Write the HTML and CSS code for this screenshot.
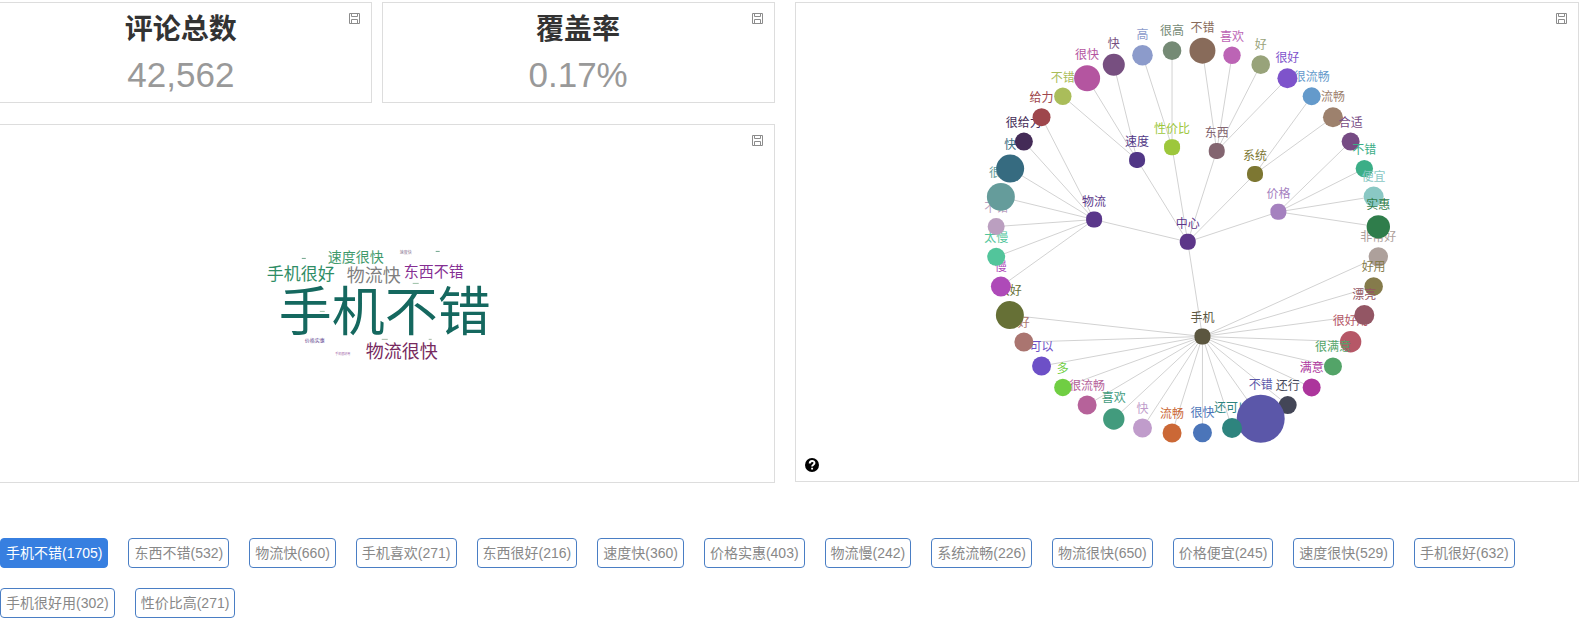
FILE: index.html
```html
<!DOCTYPE html>
<html lang="zh-CN">
<head>
<meta charset="utf-8">
<title>评论分析</title>
<link rel="stylesheet" href="styles.css">
</head>
<body>
<svg class="defs" width="0" height="0" aria-hidden="true">
  <symbol id="save" viewBox="0 0 11 11">
    <path d="M.5 .5h10v10h-10zM2.5 .5v3h6v-3M2.500 10.500v-4h6v4" fill="none" stroke="currentColor"/>
  </symbol>
</svg>
<main class="dashboard">
  <div class="left">
    <div class="stats">
      <section class="card stat">
        <h2 class="stat-title">评论总数</h2>
        <p class="stat-value">42,562</p>
        <button class="save" type="button" aria-label="保存"><svg class="save-icon"><use href="#save"/></svg></button>
      </section>
      <section class="card stat">
        <h2 class="stat-title">覆盖率</h2>
        <p class="stat-value">0.17%</p>
        <button class="save" type="button" aria-label="保存"><svg class="save-icon"><use href="#save"/></svg></button>
      </section>
    </div>
    <section class="card">
      <svg class="chart cloud" viewBox="-9 125 783 357" role="img" aria-label="词云">
        <text x="385" y="331" font-size="53" fill="#15685f">手机不错</text>
        <text x="301" y="280" font-size="17" fill="#2f8d66">手机很好</text>
        <text x="374" y="282" font-size="18" fill="#7f7f7f">物流快</text>
        <text x="356" y="262" font-size="14" fill="#3f9a6c">速度很快</text>
        <text x="434" y="277" font-size="15" fill="#852f93">东西不错</text>
        <text x="402" y="358" font-size="18" fill="#772a60">物流很快</text>
        <text x="406" y="254" font-size="4" fill="#8a7690">速度快</text>
        <text x="315" y="342" font-size="5" fill="#5a3a8a">价格实惠</text>
        <text x="343" y="355" font-size="3" fill="#a066a8">手机很好用</text>
        <g class="specks">
          <path stroke="#6fa58c" d="M302 258.500h4M436 251.500h4"/>
          <path stroke="#9cc0a6" d="M413 283.500h6M320 311.500h5"/>
          <path stroke="#a5b8a5" d="M382 339.500h6M429 339.500h3"/>
        </g>
      </svg>
      <button class="save" type="button" aria-label="保存"><svg class="save-icon"><use href="#save"/></svg></button>
    </section>
  </div>
  <section class="card">
    <svg id="tree" class="chart tree" viewBox="796 3 783 478" role="img" aria-label="关系图"></svg>
    <button class="save" type="button" aria-label="保存"><svg class="save-icon"><use href="#save"/></svg></button>
    <button class="help" type="button" aria-label="帮助">
      <svg class="help-icon" viewBox="0 0 14 14"><circle cx="7" cy="7" r="7"/><path d="M4.700 5.400C4.700 2.300 9.500 2.300 9.500 5.100C9.500 6.700 7.100 6.700 7.100 8.500M7.100 9.700v1.900" fill="none" stroke="#fff" stroke-width="1.900"/></svg>
    </button>
  </section>
</main>
<nav class="tags" aria-label="标签">
  <button type="button" class="tag active">手机不错(1705)</button>
  <button type="button" class="tag">东西不错(532)</button>
  <button type="button" class="tag">物流快(660)</button>
  <button type="button" class="tag">手机喜欢(271)</button>
  <button type="button" class="tag">东西很好(216)</button>
  <button type="button" class="tag">速度快(360)</button>
  <button type="button" class="tag">价格实惠(403)</button>
  <button type="button" class="tag">物流慢(242)</button>
  <button type="button" class="tag">系统流畅(226)</button>
  <button type="button" class="tag">物流很快(650)</button>
  <button type="button" class="tag">价格便宜(245)</button>
  <button type="button" class="tag">速度很快(529)</button>
  <button type="button" class="tag">手机很好(632)</button>
  <button type="button" class="tag">手机很好用(302)</button>
  <button type="button" class="tag">性价比高(271)</button>
</nav>
<script src="tree.js"></script>
</body>
</html>
```
FILE: styles.css
```css
* {
  box-sizing: border-box;
}

body {
  margin: 0;
  padding-top: 2px;
  background: #fff;
  color: #333;
  font-family: "Liberation Sans", "Noto Sans CJK SC", sans-serif;
  font-size: 14px;
  overflow-x: hidden;
}

.defs {
  position: absolute;
}

.dashboard {
  display: grid;
  grid-template-columns: 1fr 1fr;
  gap: 20px;
  align-items: start;
  margin-left: -10px;
  padding-right: 15px;
}

.left {
  display: grid;
  gap: 21px;
}

.stats {
  display: grid;
  grid-template-columns: 382fr 393fr;
  gap: 10px;
}

.card {
  position: relative;
  border: 1px solid #ddd;
}

.stat {
  padding: 7px 0 2px;
  text-align: center;
}

.stat-title {
  margin: 0;
  font-size: 28px;
  font-weight: bold;
  line-height: 40px;
}

.stat-value {
  margin: 0;
  color: #999;
  font-size: 35px;
  line-height: 50px;
}

.save,
.help {
  position: absolute;
  padding: 0;
  border: 0;
  background: none;
}

.save {
  top: 10px;
  right: 11px;
  color: #8c8c8c;
}

.save-icon {
  display: block;
  width: 11px;
  height: 11px;
}

.help {
  left: 9px;
  bottom: 9px;
}

.help-icon {
  display: block;
  width: 14px;
  height: 14px;
}

.chart {
  display: block;
  width: 100%;
  height: auto;
  text-anchor: middle;
  font-family: "Noto Sans CJK SC", sans-serif;
}

.tree {
  font-size: 12px;
}

.links {
  stroke: #d2d2d2;
  stroke-width: 1;
}

.tags {
  display: flex;
  flex-wrap: wrap;
  gap: 20px;
  margin-top: 55px;
  padding-right: 15px;
}

.tag {
  height: 30px;
  padding: 1px 5px 0;
  border: 1px solid #4a7ec4;
  border-radius: 4px;
  background: #fff;
  color: #888;
  font: inherit;
  line-height: 27px;
}

.active {
  border-color: #377fe0;
  background: #377fe0;
  color: #fff;
}
```
FILE: tree.js
```js
const root = { x: 1188, y: 242, color: "#5d3689", name: "中心" };

// Each leaf: name, x, y, radius, colour, and whether its label lies over its neighbours.
const groups = [
  { name: "物流", x: 1094.3, y: 219.7, color: "#5a378a", leaves: [
    ["慢", 1001, 286.7, 10, "#ae4ab8"],
    ["太慢", 996.3, 257, 9, "#52c59b"],
    ["不错", 996.3, 226.7, 8.5, "#bb9fc0"],
    ["很快", 1001, 197, 14, "#659c9b"],
    ["快", 1010.3, 168.7, 14, "#366b80"],
    ["很给力", 1024, 141.7, 9, "#442b57"],
    ["给力", 1041.7, 117.3, 9, "#9e464c"]
  ] },
  { name: "速度", x: 1137.3, y: 160, color: "#513786", leaves: [
    ["不错", 1063, 96.3, 8.7, "#aabd5a"],
    ["很快", 1087.3, 78.3, 13, "#b455a0"],
    ["快", 1114, 64.7, 11, "#774f80"]
  ] },
  { name: "性价比", x: 1172.3, y: 147.3, color: "#9dc73c", leaves: [
    ["高", 1142.7, 55.3, 10.3, "#8c9bcb"],
    ["很高", 1172.3, 50.7, 9.3, "#758a75"]
  ] },
  { name: "东西", x: 1217, y: 151, color: "#836570", leaves: [
    ["不错", 1202.7, 50.7, 13, "#886b5a"],
    ["喜欢", 1232.3, 55.3, 8.7, "#bc64b5"],
    ["好", 1261, 64.7, 9.3, "#98a37a"],
    ["很好", 1287.7, 78.3, 10, "#7e53cb"]
  ] },
  { name: "系统", x: 1255.3, y: 174, color: "#7d7732", leaves: [
    ["很流畅", 1312, 96.3, 9, "#649acb"],
    ["流畅", 1333.3, 117.3, 10, "#9d816d"]
  ] },
  { name: "价格", x: 1278.7, y: 212, color: "#a581bf", leaves: [
    ["合适", 1351, 141.7, 9, "#764b84", true],
    ["不错", 1364.7, 168.7, 8.7, "#3cae87", true],
    ["便宜", 1374, 196.7, 10, "#8ac8c4", true],
    ["实惠", 1378.7, 227, 11.7, "#2f7d4b", true]
  ] },
  { name: "手机", x: 1202.7, y: 336.7, color: "#5b563f", leaves: [
    ["非常好", 1378.7, 257, 9.7, "#ada09b"],
    ["好用", 1374, 286.7, 9.3, "#857b4b", true],
    ["漂亮", 1364.7, 315.3, 10, "#935664", true],
    ["很好用", 1351, 342, 10.7, "#b65767"],
    ["很满意", 1333.3, 366.7, 9, "#53a468", true],
    ["满意", 1312, 387.7, 9, "#ac359c"],
    ["还行", 1288, 405.3, 9, "#434657"],
    ["不错", 1261, 419, 24, "#5b57a9"],
    ["还可以", 1232.3, 428.3, 10, "#2e847e"],
    ["很快", 1202.7, 433, 9.5, "#4b75b9"],
    ["流畅", 1172.3, 433.3, 9.5, "#cb6836"],
    ["快", 1142.7, 428.3, 9.5, "#c09ccb"],
    ["喜欢", 1114, 419.3, 10.7, "#429b7d"],
    ["很流畅", 1087.3, 405.3, 9.5, "#b6629a"],
    ["多", 1063, 387.7, 8.7, "#70ce43"],
    ["可以", 1041.7, 366.3, 9.5, "#6d50c7"],
    ["好", 1024, 342.3, 9.5, "#aa7570"],
    ["很好", 1010, 315.3, 14, "#667036"]
  ] }
];

const links = [];
const under = [];
const shapes = [];
const over = [];

const line = (a, b) => links.push(`<line x1="${a[0]}" y1="${a[1]}" x2="${b[0]}" y2="${b[1]}"/>`);
const label = (name, x, y, r, color) =>
  `<text x="${x}" y="${y - r - 6}" fill="${color}">${name}</text>`;

function hub(node) {
  shapes.push(`<rect x="${node.x - 8}" y="${node.y - 8}" width="16" height="16" rx="7" fill="${node.color}"/>`);
  over.push(label(node.name, node.x, node.y, 8, node.color));
}

hub(root);
for (const group of groups) {
  line([root.x, root.y], [group.x, group.y]);
  hub(group);
  for (const [name, x, y, r, color, onTop] of group.leaves) {
    line([group.x, group.y], [x, y]);
    shapes.push(`<circle cx="${x}" cy="${y}" r="${r}" fill="${color}"/>`);
    (onTop ? over : under).push(label(name, x, y, r, color));
  }
}

document.getElementById("tree").innerHTML =
  `<g class="links">${links.join("")}</g>` + under.join("") + shapes.join("") + over.join("");
```
